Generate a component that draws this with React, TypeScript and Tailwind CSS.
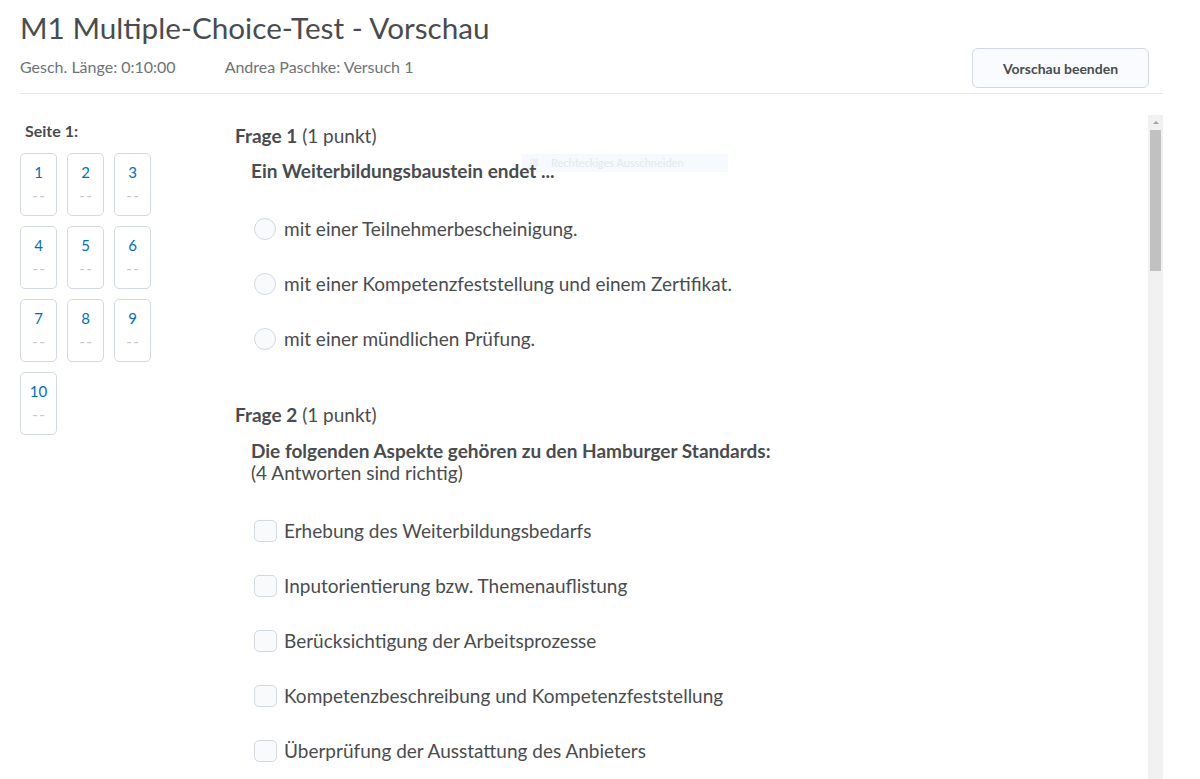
import React from "react";

const FONT = { fontFamily: "Lato, 'Noto Sans', sans-serif" };

function NavBox({ n }: { n: number }) {
  return (
    <div className="w-[37px] h-[63px] rounded-[5px] border border-[#d3d9e3] bg-white flex flex-col items-center">
      <div className="mt-[8px] text-[15px] leading-[20px] text-[#006fbf]">{n}</div>
      <div className="mt-[5px] text-[15px] leading-[16px] text-[#c3c7cb] tracking-[1.5px] pl-[1.5px]">--</div>
    </div>
  );
}

function Radio({ label }: { label: string }) {
  return (
    <div className="h-[55px] flex items-center pl-[19px]">
      <div className="w-[22px] h-[22px] rounded-full border border-[#d3d9e3] bg-[#f9fafb] shrink-0" />
      <span className="ml-[8px] text-[19px] leading-[24px] text-[#494c4e]">{label}</span>
    </div>
  );
}

function Check({ label }: { label: string }) {
  return (
    <div className="h-[55px] flex items-center pl-[19px]">
      <div className="w-[23px] h-[22px] rounded-[5px] border border-[#d3d9e3] bg-[#f9fafb] shrink-0" />
      <span className="ml-[7px] text-[19px] leading-[24px] text-[#494c4e]">{label}</span>
    </div>
  );
}

export default function App() {
  return (
    <div className="w-[1200px] h-[779px] overflow-hidden bg-white relative" style={FONT}>
      <div className="ml-[20px] w-[1143px]">
        <h1 className="pt-[10px] text-[29.7px] leading-[36px] font-normal text-[#494c4e]">
          M1 Multiple-Choice-Test - Vorschau
        </h1>
        <div className="flex items-center justify-between mt-[2px] h-[40px]">
          <div className="flex text-[16px] leading-[20px] text-[#6e7376] -mt-[2px]">
            <span>Gesch. Länge: 0:10:00</span>
            <span className="ml-[49px]">Andrea Paschke: Versuch 1</span>
          </div>
          <button className="mr-[14px] w-[177px] h-[40px] rounded-[6px] border border-[#d3d9e3] bg-[#f9fbff] text-[14px] font-bold text-[#494c4e]">
            Vorschau beenden
          </button>
        </div>
        <div className="mt-[5px] h-[1px] bg-[#e3e9f1]" />
        <div className="flex">
          <div className="w-[215px] shrink-0 pt-[27px]">
            <div className="pl-[5px] text-[16px] leading-[20px] font-bold text-[#494c4e]">Seite 1:</div>
            <div className="mt-[12px] grid grid-cols-[37px_37px_37px] gap-x-[10px] gap-y-[10px]">
              {[1, 2, 3, 4, 5, 6, 7, 8, 9, 10].map((n) => (
                <NavBox key={n} n={n} />
              ))}
            </div>
          </div>
          <div className="flex-1 relative pt-[29px]">
            <div className="absolute left-[287px] top-[60px] w-[206px] h-[18px] bg-[#f6f9fd] flex items-center pl-[8px]">
              <div className="w-[8px] h-[8px] bg-[#edf1f6]" />
              <span className="ml-[13px] text-[11px] text-[#e4e8ee]">Rechteckiges Ausschneiden</span>
            </div>
            <div className="relative">
              <div className="text-[19px] leading-[26px] text-[#494c4e]">
                <span className="font-bold">Frage 1</span> <span>(1 punkt)</span>
              </div>
              <div className="mt-[11px] pl-[16px] text-[19px] leading-[22px] font-bold text-[#494c4e]">
                Ein Weiterbildungsbaustein endet ...
              </div>
              <div className="mt-[19px]">
                <Radio label="mit einer Teilnehmerbescheinigung." />
                <Radio label="mit einer Kompetenzfeststellung und einem Zertifikat." />
                <Radio label="mit einer mündlichen Prüfung." />
              </div>
              <div className="mt-[36px] text-[19px] leading-[26px] text-[#494c4e]">
                <span className="font-bold">Frage 2</span> <span>(1 punkt)</span>
              </div>
              <div className="mt-[12px] pl-[16px] text-[19px] leading-[22px] text-[#494c4e]">
                <div className="font-bold">Die folgenden Aspekte gehören zu den Hamburger Standards:</div>
                <div>(4 Antworten sind richtig)</div>
              </div>
              <div className="mt-[19px]">
                <Check label="Erhebung des Weiterbildungsbedarfs" />
                <Check label="Inputorientierung bzw. Themenauflistung" />
                <Check label="Berücksichtigung der Arbeitsprozesse" />
                <Check label="Kompetenzbeschreibung und Kompetenzfeststellung" />
                <Check label="Überprüfung der Ausstattung des Anbieters" />
              </div>
            </div>
          </div>
          <div className="w-[15px] shrink-0 mt-[21px] h-[700px] bg-[#f1f1f1] flex flex-col">
            <div className="h-[15px] flex items-center justify-center">
              <div className="w-0 h-0 border-l-[3px] border-r-[3px] border-b-[3px] border-l-transparent border-r-transparent border-b-[#a3a3a3]" />
            </div>
            <div className="mx-[2px] h-[141px] bg-[#c1c1c1]" />
          </div>
        </div>
      </div>
    </div>
  );
}
